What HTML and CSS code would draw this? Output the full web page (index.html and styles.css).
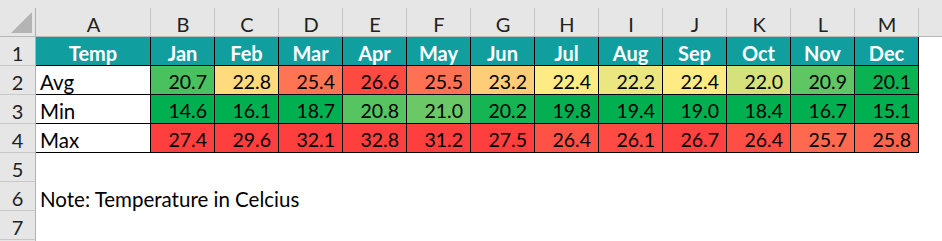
FILE: index.html
```html
<!DOCTYPE html>
<html>
<head>
<meta charset="utf-8">
<link rel="stylesheet" href="styles.css">
</head>
<body>
<div class="sheet">
  <div class="corner"><svg width="35" height="37" viewBox="0 0 35 37"><polygon points="32,12 32,33 11,33" fill="#b4b4b4"/></svg></div>
  <div class="ch">A</div><div class="ch">B</div><div class="ch">C</div><div class="ch">D</div><div class="ch">E</div><div class="ch">F</div><div class="ch">G</div><div class="ch">H</div><div class="ch">I</div><div class="ch">J</div><div class="ch">K</div><div class="ch">L</div><div class="ch">M</div><div class="ch last"></div>

  <div class="rh">1</div>
  <div class="c hd">Temp</div><div class="c hd">Jan</div><div class="c hd">Feb</div><div class="c hd">Mar</div><div class="c hd">Apr</div><div class="c hd">May</div><div class="c hd">Jun</div><div class="c hd">Jul</div><div class="c hd">Aug</div><div class="c hd">Sep</div><div class="c hd">Oct</div><div class="c hd">Nov</div><div class="c hd">Dec</div><div class="e"></div>

  <div class="rh">2</div>
  <div class="c lbl">Avg</div>
  <div class="c n" style="background:#4ac15f">20.7</div>
  <div class="c n" style="background:#ffdb7e">22.8</div>
  <div class="c n" style="background:#ff7554">25.4</div>
  <div class="c n" style="background:#ff4a42">26.6</div>
  <div class="c n" style="background:#ff7153">25.5</div>
  <div class="c n" style="background:#ffcc77">23.2</div>
  <div class="c n" style="background:#ffeb84">22.4</div>
  <div class="c n" style="background:#eae680">22.2</div>
  <div class="c n" style="background:#ffeb84">22.4</div>
  <div class="c n" style="background:#d5e17b">22.0</div>
  <div class="c n" style="background:#60c664">20.9</div>
  <div class="c n" style="background:#0bb252">20.1</div>
  <div class="e"></div>

  <div class="rh">3</div>
  <div class="c lbl">Min</div>
  <div class="c n" style="background:#00b050">14.6</div>
  <div class="c n" style="background:#00b050">16.1</div>
  <div class="c n" style="background:#00b050">18.7</div>
  <div class="c n" style="background:#55c461">20.8</div>
  <div class="c n" style="background:#6ac966">21.0</div>
  <div class="c n" style="background:#15b554">20.2</div>
  <div class="c n" style="background:#05ae50">19.8</div>
  <div class="c n" style="background:#00b050">19.4</div>
  <div class="c n" style="background:#00b050">19.0</div>
  <div class="c n" style="background:#00b050">18.4</div>
  <div class="c n" style="background:#00b050">16.7</div>
  <div class="c n" style="background:#00b050">15.1</div>
  <div class="e"></div>

  <div class="rh">4</div>
  <div class="c lbl">Max</div>
  <div class="c n" style="background:#ff3e3e">27.4</div>
  <div class="c n" style="background:#ff3e3e">29.6</div>
  <div class="c n" style="background:#ff3e3e">32.1</div>
  <div class="c n" style="background:#ff3e3e">32.8</div>
  <div class="c n" style="background:#ff3e3e">31.2</div>
  <div class="c n" style="background:#ff3e3e">27.5</div>
  <div class="c n" style="background:#ff5246">26.4</div>
  <div class="c n" style="background:#ff4b43">26.1</div>
  <div class="c n" style="background:#ff4240">26.7</div>
  <div class="c n" style="background:#ff4e44">26.4</div>
  <div class="c n" style="background:#ff6950">25.7</div>
  <div class="c n" style="background:#ff654e">25.8</div>
  <div class="e"></div>

  <div class="rh">5</div>
  <div class="blank"></div>

  <div class="rh">6</div>
  <div class="blank note">Note: Temperature in Celcius</div>

  <div class="rh">7</div>
  <div class="blank"></div>

  <div class="rh end"></div>
  <div class="blank"></div>
</div>
</body>
</html>
```

FILE: styles.css
```css
html, body {
  margin: 0;
  padding: 0;
  background: #ffffff;
}

.sheet {
  width: 942px;
  height: 241px;
  overflow: hidden;
  display: grid;
  grid-template-columns: 36px 115px repeat(12, 64px) 1fr;
  grid-template-rows: 37px repeat(7, 29px) 1fr;
  font-family: "Lato", "Open Sans", sans-serif;
  font-size: 20.5px;
  line-height: 22px;
  color: #000;
}

.corner,
.ch {
  box-sizing: border-box;
  background-color: #e6e6e6;
  border-bottom: 1px solid #b8b8b8;
}

.corner {
  background-image: linear-gradient(#b0b0b0, #b0b0b0);
  background-repeat: no-repeat;
  background-position: right 8px;
  background-size: 1px calc(100% - 8px);
}

.corner svg {
  display: block;
}

.ch {
  display: flex;
  align-items: flex-end;
  justify-content: center;
  padding-bottom: 1px;
  color: #222;
  font-size: 20px;
  background-image: linear-gradient(#c6c6c6, #c6c6c6);
  background-repeat: no-repeat;
  background-position: right 8px;
  background-size: 1px calc(100% - 8px);
}

.ch.last {
  background-image: none;
}

.rh {
  box-sizing: border-box;
  background: #e6e6e6;
  border-right: 1px solid #b0b0b0;
  border-bottom: 1px solid #c8c8c8;
  display: flex;
  align-items: flex-end;
  justify-content: center;
  padding-bottom: 1px;
  color: #222;
  font-size: 20px;
}

.rh.end {
  border-bottom: none;
}

.c {
  box-sizing: border-box;
  border-right: 1px solid #000;
  border-bottom: 1px solid #000;
  display: flex;
  align-items: flex-end;
  padding-bottom: 1px;
  white-space: nowrap;
}

.hd {
  background: #109e9f;
  color: #ffffff;
  font-weight: 700;
  font-size: 20px;
  justify-content: center;
}

.lbl {
  background: #ffffff;
  padding-left: 4px;
}

.n {
  justify-content: flex-end;
  padding-right: 7px;
  font-size: 19.5px;
}

.e {
  background: #ffffff;
}

.blank {
  grid-column: 2 / -1;
  background: #ffffff;
  display: flex;
  align-items: flex-end;
  padding-bottom: 1px;
}

.note {
  padding-left: 4px;
  white-space: nowrap;
}
```
